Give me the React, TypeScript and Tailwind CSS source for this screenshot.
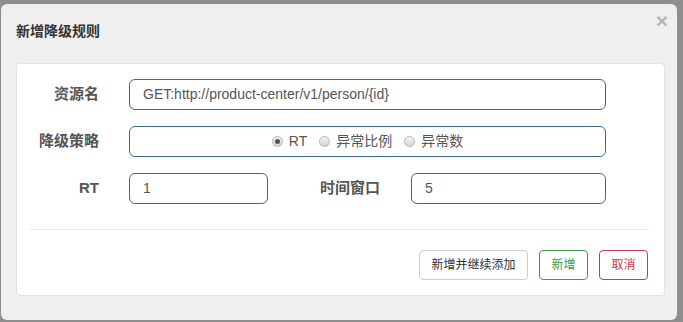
import React from 'react';

const font = { fontFamily: '"Liberation Sans", Arial, "Noto Sans CJK SC", sans-serif' };

function Radio({ checked, label }: { checked?: boolean; label: string }) {
  return (
    <span className="flex items-center">
      <span className="flex h-[11px] w-[11px] items-center justify-center rounded-full border border-[#b5b5b5] bg-gradient-to-b from-[#f4f4f4] to-[#d6d6d6]">
        {checked && <span className="h-[5px] w-[5px] rounded-full bg-[#555]" />}
      </span>
      <span className="ml-[6px] text-[14px] text-[#555]">{label}</span>
    </span>
  );
}

export default function App() {
  return (
    <div className="h-[322px] w-[683px] overflow-hidden bg-[#8e8e8e] pl-[1px] pt-[4px]" style={font}>
      <div className="relative h-[316px] w-[676px] rounded-[6px] bg-[#efefef]">
        <div className="px-[15px] pt-[17px] text-[14px] font-bold leading-[20px] text-[#333]">新增降级规则</div>
        <button className="absolute right-[9px] top-[6px] text-[21px] font-bold leading-[21px] text-[#b4b4b4]">×</button>

        <div className="ml-[15px] mt-[22px] w-[649px] rounded-[4px] border border-[#e2e2e2] bg-white pb-[15px] pt-[15px]">
          <div className="flex flex-col gap-[16px]">
            <div className="flex items-center">
              <label className="w-[82px] text-right text-[15px] font-bold text-[#555]">资源名</label>
              <div className="ml-[30px] flex h-[31px] w-[477px] items-center rounded-[6px] border border-[#41698a] px-[13px] text-[14px] text-[#555]">
                GET:http://product-center/v1/person/{'{id}'}
              </div>
            </div>
            <div className="flex items-center">
              <label className="w-[82px] text-right text-[15px] font-bold text-[#555]">降级策略</label>
              <div className="ml-[30px] flex h-[31px] w-[477px] items-center justify-center gap-[12px] rounded-[6px] border border-[#41698a]">
                <Radio checked label="RT" />
                <Radio label="异常比例" />
                <Radio label="异常数" />
              </div>
            </div>
            <div className="flex items-center">
              <label className="w-[82px] text-right text-[15px] font-bold text-[#555]">RT</label>
              <div className="ml-[30px] flex h-[31px] w-[139px] items-center rounded-[6px] border border-[#41698a] px-[13px] text-[14px] text-[#555]">
                1
              </div>
              <label className="w-[112px] text-right text-[15px] font-bold text-[#555]">时间窗口</label>
              <div className="ml-[31px] flex h-[31px] w-[195px] items-center rounded-[6px] border border-[#41698a] px-[13px] text-[14px] text-[#555]">
                5
              </div>
            </div>
          </div>

          <div className="ml-[13px] mr-[15px] mt-[25px] border-t border-[#e5e5e5]" />

          <div className="mr-[16px] mt-[20px] flex justify-end gap-[11px]">
            <button className="h-[30px] w-[109px] rounded-[4px] border border-[#ccc] bg-white text-[12px] text-[#333]">
              新增并继续添加
            </button>
            <button className="h-[30px] w-[49px] rounded-[4px] border border-[#3d9a4e] bg-white text-[12px] text-[#3d9a4e]">
              新增
            </button>
            <button className="h-[30px] w-[49px] rounded-[4px] border border-[#c9394f] bg-white text-[12px] text-[#c9394f]">
              取消
            </button>
          </div>
        </div>
      </div>
    </div>
  );
}
